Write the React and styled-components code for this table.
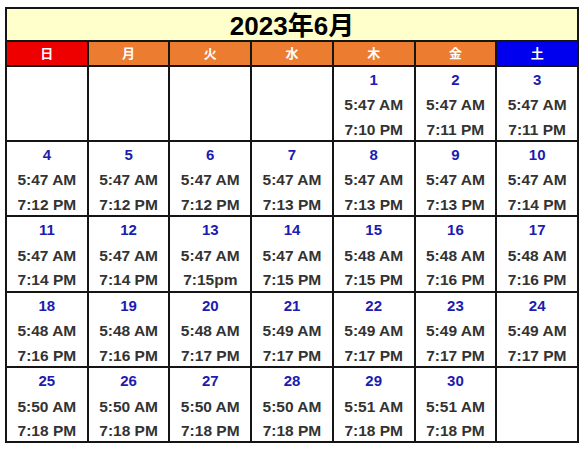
import React from "react";
import styled, { createGlobalStyle } from "styled-components";

const GlobalStyle = createGlobalStyle`
  body {
    margin: 0;
    background: #ffffff;
    font-family: "Liberation Sans", "Noto Sans CJK JP", sans-serif;
  }
`;

const weekdays = [
  { label: "日", bg: "#ee0000" },
  { label: "月", bg: "#ec7c30" },
  { label: "火", bg: "#ec7c30" },
  { label: "水", bg: "#ec7c30" },
  { label: "木", bg: "#ec7c30" },
  { label: "金", bg: "#ec7c30" },
  { label: "土", bg: "#0000ee" },
];

// June 2023 sunrise / sunset
const days = [
  null, null, null, null,
  [1, "5:47 AM", "7:10 PM"],
  [2, "5:47 AM", "7:11 PM"],
  [3, "5:47 AM", "7:11 PM"],
  [4, "5:47 AM", "7:12 PM"],
  [5, "5:47 AM", "7:12 PM"],
  [6, "5:47 AM", "7:12 PM"],
  [7, "5:47 AM", "7:13 PM"],
  [8, "5:47 AM", "7:13 PM"],
  [9, "5:47 AM", "7:13 PM"],
  [10, "5:47 AM", "7:14 PM"],
  [11, "5:47 AM", "7:14 PM"],
  [12, "5:47 AM", "7:14 PM"],
  [13, "5:47 AM", "7:15pm"],
  [14, "5:47 AM", "7:15 PM"],
  [15, "5:48 AM", "7:15 PM"],
  [16, "5:48 AM", "7:16 PM"],
  [17, "5:48 AM", "7:16 PM"],
  [18, "5:48 AM", "7:16 PM"],
  [19, "5:48 AM", "7:16 PM"],
  [20, "5:48 AM", "7:17 PM"],
  [21, "5:49 AM", "7:17 PM"],
  [22, "5:49 AM", "7:17 PM"],
  [23, "5:49 AM", "7:17 PM"],
  [24, "5:49 AM", "7:17 PM"],
  [25, "5:50 AM", "7:18 PM"],
  [26, "5:50 AM", "7:18 PM"],
  [27, "5:50 AM", "7:18 PM"],
  [28, "5:50 AM", "7:18 PM"],
  [29, "5:51 AM", "7:18 PM"],
  [30, "5:51 AM", "7:18 PM"],
  null,
];

const App = () => {
  return (
    <>
      <GlobalStyle />
      <Calendar>
        <Title>2023年6月</Title>
        {weekdays.map((d) => (
          <DayHead key={d.label} $bg={d.bg}>
            {d.label}
          </DayHead>
        ))}
        {days.map((d, i) => (
          <DayCell key={i}>
            {d && (
              <>
                <DateNum>{d[0]}</DateNum>
                <Time>{d[1]}</Time>
                <Time>{d[2]}</Time>
              </>
            )}
          </DayCell>
        ))}
      </Calendar>
    </>
  );
};

export default App;

const Calendar = styled.div`
  display: grid;
  grid-template-columns: repeat(7, 1fr);
  grid-template-rows: 33px 24.5px repeat(5, 75.4px);
  width: 574px;
  margin: 7px 0 0 5px;
  border-top: 2px solid #151515;
  border-left: 2px solid #151515;
  box-sizing: border-box;
`;

const Cell = styled.div`
  border-right: 2px solid #151515;
  border-bottom: 2px solid #151515;
  min-width: 0;
`;

const Title = styled(Cell)`
  grid-column: 1 / -1;
  background: #ffffcc;
  display: flex;
  align-items: center;
  justify-content: center;
  padding-bottom: 3px;
  font-size: 26px;
  font-weight: bold;
  color: #000;
`;

const DayHead = styled(Cell)`
  background: ${(p) => p.$bg};
  color: #ffffff;
  display: flex;
  align-items: center;
  justify-content: center;
  padding-bottom: 2px;
  font-size: 13px;
  font-weight: bold;
`;

const DayCell = styled(Cell)`
  background: #ffffff;
  display: flex;
  flex-direction: column;
  align-items: center;
  padding-top: 2px;
`;

const DateNum = styled.div`
  height: 22.5px;
  line-height: 22.5px;
  margin-bottom: 2px;
  font-size: 15px;
  font-weight: bold;
  color: #1c1cb0;
`;

const Time = styled.div`
  height: 24.5px;
  line-height: 24.5px;
  font-size: 15.5px;
  font-weight: bold;
  color: #333333;
`;
